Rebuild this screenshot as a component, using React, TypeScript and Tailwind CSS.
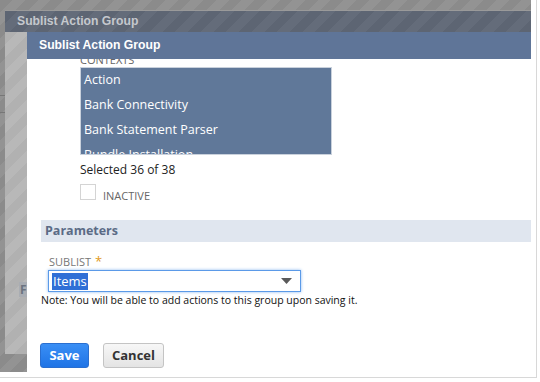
import React from "react";

export default function App() {
  const items = ["Action", "Bank Connectivity", "Bank Statement Parser", "Bundle Installation"];
  return (
    <div className="w-[540px] h-[382px] bg-white" style={{ fontFamily: '"Open Sans", sans-serif' }}>
      <div className="w-[537px] h-[378px] border-r border-b border-[#d8d8d8]">
        <div className="relative w-[531px] h-[372px] overflow-hidden bg-[repeating-linear-gradient(135deg,#8b8b8b_0px,#8b8b8b_9px,#939393_9px,#939393_18px)]">
          <div className="absolute left-0 top-[95px] w-[5px] h-px bg-[#777]" />
          <div className="absolute left-0 top-[112px] w-[5px] h-px bg-[#777]" />
          {/* back dialog */}
          <div className="absolute left-[5px] top-[10px] w-[526px] h-[344px] flex flex-col">
            <div className="h-[22px] bg-[repeating-linear-gradient(135deg,#5d6573_0px,#5d6573_9px,#646c7a_9px,#646c7a_18px)] flex items-center pl-[12px] border-t border-[#9a9a9a]">
              <span className="text-[12.2px] font-bold text-[#c5c8cd]" style={{ fontFamily: '"Liberation Sans", Arial, sans-serif' }}>
                Sublist Action Group
              </span>
            </div>
            <div className="flex-1 bg-[repeating-linear-gradient(135deg,#b1b1b1_0px,#b1b1b1_9px,#b8b8b8_9px,#b8b8b8_18px)] relative">
              <div className="absolute left-[14px] top-[250px] w-[10px] h-[15px] bg-[#a9adb3] text-[12px] font-bold text-[#6c7480] leading-[15px] pl-[1px]">F</div>
            </div>
          </div>
          {/* front dialog */}
          <div className="absolute left-[27px] top-[32px] w-[504px] h-[340px] bg-white flex flex-col">
            <div className="h-[27px] bg-[#5f7598] flex items-center pl-[12px] shrink-0 relative z-10">
              <span className="text-[12.2px] font-bold text-white" style={{ fontFamily: '"Liberation Sans", Arial, sans-serif' }}>
                Sublist Action Group
              </span>
            </div>
            <div className="flex-1 relative">
              <div className="mt-[-7px] flex flex-col">
                <div className="pl-[53px] text-[11px] leading-[15px] text-[#666] uppercase">Contexts</div>
                <div className="ml-[53px] w-[252px] h-[88px] bg-[#607899] border border-[#c9d1dc] overflow-hidden">
                  {items.map((it) => (
                    <div key={it} className="h-[25px] flex items-center pl-[3px] text-[12.5px] text-white">
                      {it}
                    </div>
                  ))}
                </div>
                <div className="pl-[53px] mt-[7px] text-[12px] leading-[16px] text-[#222]">Selected 36 of 38</div>
                <div className="pl-[53px] mt-[6px] flex items-start gap-[7px]">
                  <div className="w-[16px] h-[16px] border border-[#d4d4d4] bg-white" />
                  <span className="text-[11px] leading-[15px] text-[#666] mt-[4px]">INACTIVE</span>
                </div>
                <div className="ml-[14px] mt-[17px] h-[22px] bg-[#e0e6ef] flex items-center pl-[4px]">
                  <span className="text-[12.5px] font-bold text-[#5b6b86]">Parameters</span>
                </div>
                <div className="pl-[22px] mt-[13px] text-[11px] leading-[14px] text-[#777] flex items-start gap-[4px]">
                  <span>SUBLIST</span>
                  <span className="text-[#e29a1c] text-[13px] leading-[12px]">*</span>
                </div>
                <div className="ml-[21px] mt-[1px] w-[253px] h-[22px] border border-[#5b9ae8] shadow-[0_0_3px_#8fbaf0] flex items-center justify-between pl-[3px] pr-[8px]">
                  <span className="bg-[#2f6fd6] text-white text-[13px] leading-[17px] px-px">Items</span>
                  <svg width="11" height="6" viewBox="0 0 11 6">
                    <path d="M0 0 L11 0 L5.5 6 Z" fill="#5a5a5a" />
                  </svg>
                </div>
                <div className="pl-[14px] mt-[1px] text-[10.5px] leading-[15px] text-[#111]">
                  Note: You will be able to add actions to this group upon saving it.
                </div>
                <div className="pl-[13px] mt-[35px] flex gap-[14px]">
                  <button className="w-[49px] h-[25px] rounded-[3px] bg-[linear-gradient(#3a8ff5,#1f74e6)] border border-[#2a6fd0] text-white text-[13px] font-bold">
                    Save
                  </button>
                  <button className="w-[61px] h-[25px] rounded-[3px] bg-[linear-gradient(#f7f7f7,#e4e4e4)] border border-[#c4c4c4] text-[#333] text-[13px] font-bold">
                    Cancel
                  </button>
                </div>
              </div>
            </div>
          </div>
        </div>
      </div>
    </div>
  );
}
